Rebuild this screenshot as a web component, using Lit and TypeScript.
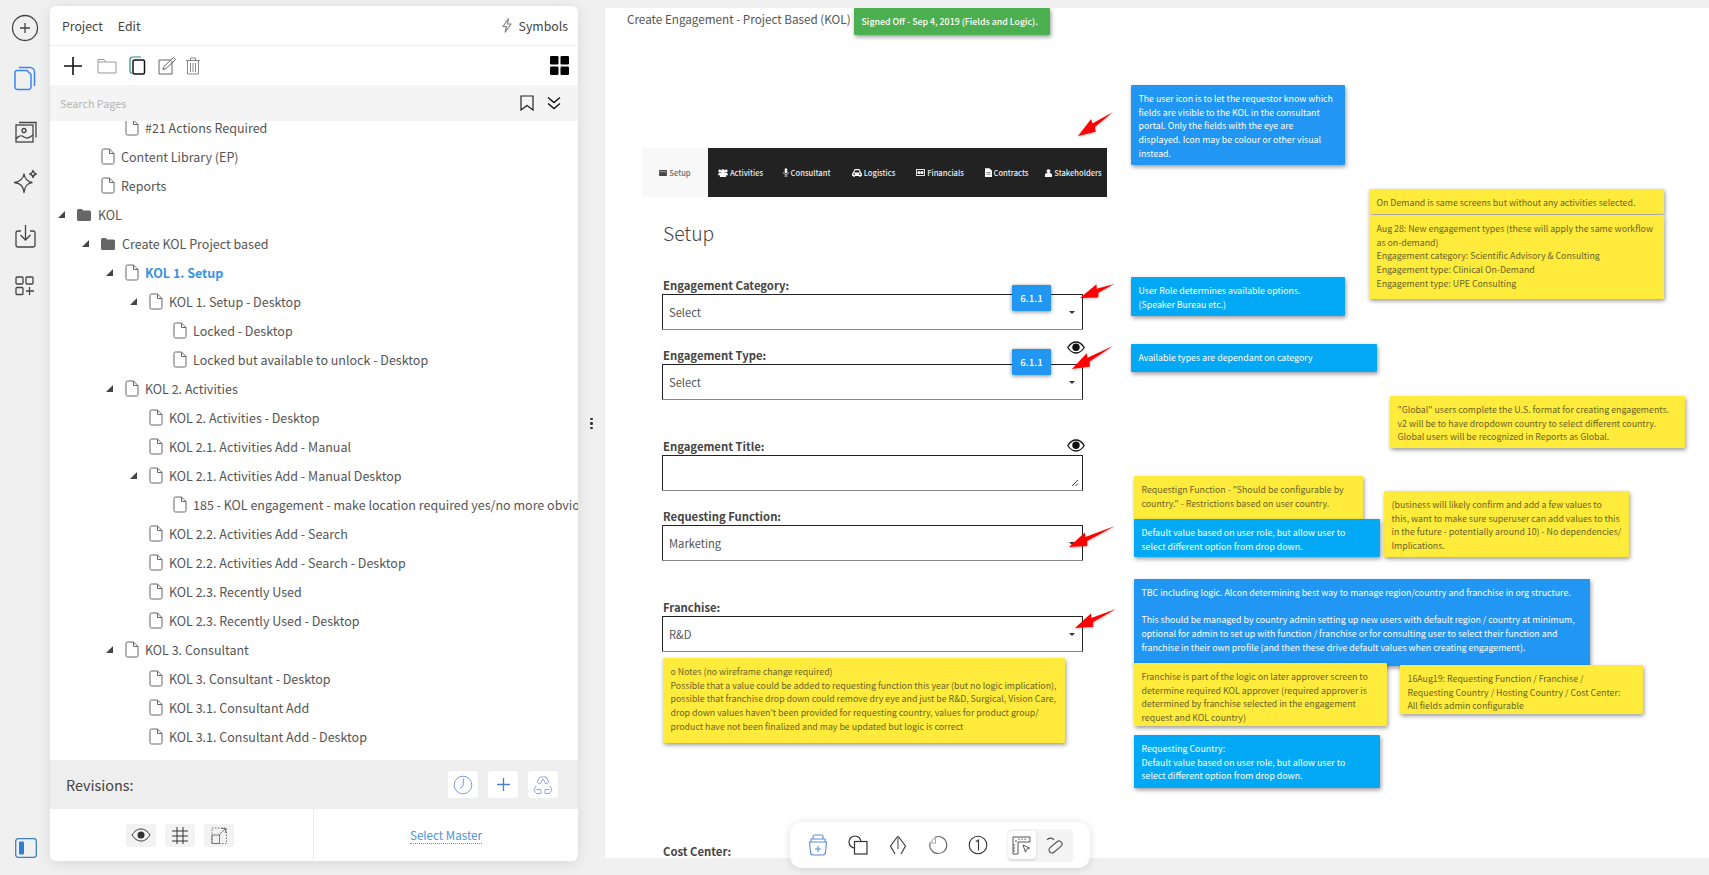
import { LitElement, html, svg, css } from "lit";
import { customElement } from "lit/decorators.js";

type Row = { t: string; l: number; tri?: boolean; folder?: boolean; active?: boolean };
const rows: Row[] = [
  { t: "#21 Actions Required", l: 2 },
  { t: "Content Library (EP)", l: 1 },
  { t: "Reports", l: 1 },
  { t: "KOL", l: 0, tri: true, folder: true },
  { t: "Create KOL Project based", l: 1, tri: true, folder: true },
  { t: "KOL 1. Setup", l: 2, tri: true, active: true },
  { t: "KOL 1. Setup - Desktop", l: 3, tri: true },
  { t: "Locked - Desktop", l: 4 },
  { t: "Locked but available to unlock - Desktop", l: 4 },
  { t: "KOL 2. Activities", l: 2, tri: true },
  { t: "KOL 2. Activities - Desktop", l: 3 },
  { t: "KOL 2.1. Activities Add - Manual", l: 3 },
  { t: "KOL 2.1. Activities Add - Manual Desktop", l: 3, tri: true },
  { t: "185 - KOL engagement - make location required yes/no more obvious", l: 4 },
  { t: "KOL 2.2. Activities Add - Search", l: 3 },
  { t: "KOL 2.2. Activities Add - Search - Desktop", l: 3 },
  { t: "KOL 2.3. Recently Used", l: 3 },
  { t: "KOL 2.3. Recently Used - Desktop", l: 3 },
  { t: "KOL 3. Consultant", l: 2, tri: true },
  { t: "KOL 3. Consultant - Desktop", l: 3 },
  { t: "KOL 3.1. Consultant Add", l: 3 },
  { t: "KOL 3.1. Consultant Add - Desktop", l: 3 },
];

// canvas origin is at page (605, 8); data below is in page coordinates
const OX = 605, OY = 8;
type Note = { x: number; y: number; w: number; h: number; c: string; lines: string[] };
const Y = "y", B = "b", L = "l", G = "g";
const notes: Note[] = [
  { x: 854, y: 8, w: 196, h: 27, c: G, lines: ["Signed Off - Sep 4, 2019 (Fields and Logic)."] },
  { x: 1131, y: 85, w: 214, h: 80, c: B, lines: ["The user icon is to let the requestor know which", "fields are visible to the KOL in the consultant", "portal. Only the fields with the eye are", "displayed. Icon may be colour or other visual", "instead."] },
  { x: 1369, y: 189, w: 295, h: 25, c: Y, lines: ["On Demand is same screens but without any activities selected."] },
  { x: 1369, y: 215, w: 295, h: 84, c: Y, lines: ["Aug 28: New engagement types (these will apply the same workflow", "as on-demand)", "Engagement category: Scientific Advisory & Consulting", "Engagement type: Clinical On-Demand", "Engagement type: UPE Consulting"] },
  { x: 1131, y: 277, w: 214, h: 39, c: L, lines: ["User Role determines available options.", "(Speaker Bureau etc.)"] },
  { x: 1131, y: 344, w: 246, h: 28, c: L, lines: ["Available types are dependant on category"] },
  { x: 1390, y: 396, w: 295, h: 52, c: Y, lines: ["\"Global\" users complete the U.S. format for creating engagements.", "v2 will be to have dropdown country to select different country.", "Global users will be recognized in Reports as Global."] },
  { x: 1134, y: 476, w: 229, h: 44, c: Y, lines: ["Requestign Function - \"Should be configurable by", "country.\" - Restrictions based on user country."] },
  { x: 1384, y: 491, w: 245, h: 66, c: Y, lines: ["(business will likely confirm and add a few values to", "this, want to make sure superuser can add values to this", "in the future - potentially around 10) - No dependencies/", "Implications."] },
  { x: 1134, y: 519, w: 246, h: 38, c: L, lines: ["Default value based on user role, but allow user to", "select different option from drop down."] },
  { x: 1134, y: 579, w: 456, h: 87, c: B, lines: ["TBC including logic. Alcon determining best way to manage region/country and franchise in org structure.", "\u00a0", "This should be managed by country admin setting up new users with default region / country at minimum,", "optional for admin to set up with function / franchise or for consulting user to select their function and", "franchise in their own profile (and then these drive default values when creating engagement)."] },
  { x: 1134, y: 663, w: 253, h: 63, c: Y, lines: ["Franchise is part of the logic on later approver screen to", "determine required KOL approver (required approver is", "determined by franchise selected in the engagement", "request and KOL country)"] },
  { x: 1400, y: 665, w: 243, h: 49, c: Y, lines: ["16Aug19: Requesting Function / Franchise /", "Requesting Country / Hosting Country / Cost Center:", "All fields admin configurable"] },
  { x: 663, y: 658, w: 402, h: 85, c: Y, lines: ["o Notes  (no wireframe change required)", "Possible that a value could be added to requesting function this year (but no logic implication),", "possible that franchise drop down could remove dry eye and just be R&D, Surgical, Vision Care,", "drop down values haven't been provided for requesting country, values for product group/", "product have not been finalized and may be updated but logic is correct"] },
  { x: 1134, y: 735, w: 246, h: 53, c: L, lines: ["Requesting Country:", "Default value based on user role, but allow user to", "select different option from drop down."] },
];

const fields = [
  { label: "Engagement Category:", ly: 285, top: 294, h: 36, val: "Select", caret: true },
  { label: "Engagement Type:", ly: 355, top: 364, h: 36, val: "Select", caret: true },
  { label: "Engagement Title:", ly: 446, top: 455, h: 36, val: "", caret: false },
  { label: "Requesting Function:", ly: 516, top: 525, h: 36, val: "Marketing", caret: true },
  { label: "Franchise:", ly: 607, top: 616, h: 36, val: "R&D", caret: true },
];

const arrows = [
  [1113, 112, 1078, 136],
  [1114, 284, 1080, 298],
  [1113, 346, 1072, 369],
  [1115, 526, 1069, 547],
  [1116, 609, 1075, 628],
];

const doc = html`<svg class="ico" width="14" height="17" viewBox="0 0 14 17"><path d="M2.5 1h6L13 5.500V14.500a1.500 1.500 0 0 1-1.500 1.500h-9A1.500 1.500 0 0 1 1 14.500V2.500A1.500 1.500 0 0 1 2.500 1zM8.500 1v4.500H13" fill="none" stroke="#666" stroke-width="1"/></svg>`;
const folder = html`<svg class="ico" width="16" height="14" viewBox="0 0 16 14"><path d="M1 2.500A1.500 1.500 0 0 1 2.500 1h3.200l1.500 1.500h6.300A1.500 1.500 0 0 1 15 4v7.500a1.500 1.500 0 0 1-1.500 1.500h-11A1.500 1.500 0 0 1 1 11.500z" fill="#666"/></svg>`;
const eye = html`<svg width="18" height="13" viewBox="0 0 18 13"><path d="M.8 6.500C3 3 5.800 1 9 1s6 2 8.200 5.500C15 10 12.200 12 9 12S3 10 .8 6.500z" fill="#fff" stroke="#111" stroke-width="1.300"/><circle cx="9" cy="6.300" r="3.700" fill="#111"/></svg>`;

const tabs = [
  { t: "Setup", w: 66, i: html`<svg width="8" height="6" viewBox="0 0 9 7"><path d="M0 0h9v7H0z" fill="#444"/><path d="M1 2h7" stroke="#ccc" stroke-width=".8"/></svg>` },
  { t: "Activities", w: 65, i: html`<svg width="10" height="8" viewBox="0 0 11 9"><circle cx="5.500" cy="2.500" r="2.300" fill="#fff"/><circle cx="1.800" cy="2.200" r="1.500" fill="#fff"/><circle cx="9.200" cy="2.200" r="1.500" fill="#fff"/><path d="M0 7c0-2 1-3 2-3h7c1 0 2 1 2 3H9v2H2V7z" fill="#fff"/></svg>` },
  { t: "Consultant", w: 67, i: html`<svg width="6" height="9" viewBox="0 0 7 10"><rect x="2" y="0" width="3" height="6" rx="1.500" fill="#fff"/><path d="M.7 4.500C.7 6.500 2 7.300 3.500 7.300S6.300 6.500 6.300 4.500M3.500 7.300V9M1.800 9.300h3.400" fill="none" stroke="#fff" stroke-width=".8"/></svg>` },
  { t: "Logistics", w: 67, i: html`<svg width="10" height="8" viewBox="0 0 11 9"><path d="M1 4l1.300-3.200C2.500.3 3 0 3.500 0h4c.5 0 1 .3 1.200.8L10 4c.6.300 1 .8 1 1.500V8H9.500v1H8V8H3v1H1.500V8H0V5.500C0 4.800.4 4.300 1 4z" fill="#fff"/><circle cx="2.300" cy="5.800" r=".9" fill="#222"/><circle cx="8.700" cy="5.800" r=".9" fill="#222"/><path d="M2.400 3.800l.9-2.500h4.400l.9 2.500z" fill="#222"/></svg>` },
  { t: "Financials", w: 66, i: html`<svg width="9" height="7" viewBox="0 0 10 8"><rect width="10" height="8" fill="#fff"/><rect x="1" y="1" width="8" height="6" fill="#222"/><circle cx="3.300" cy="4" r="1.800" fill="#fff"/><circle cx="6.700" cy="4" r="1.800" fill="#fff"/></svg>` },
  { t: "Contracts", w: 67, i: html`<svg width="7" height="9" viewBox="0 0 8 10"><path d="M0 0h5l3 3v7H0z" fill="#fff"/><path d="M1.500 5h5M1.500 7h5" stroke="#222" stroke-width=".6"/></svg>` },
  { t: "Stakeholders", w: 67, i: html`<svg width="7" height="8" viewBox="0 0 8 9"><circle cx="4" cy="2.300" r="2.200" fill="#fff"/><path d="M0 9V6.800C0 5.300 1 4.500 2.200 4.500h3.600C7 4.500 8 5.300 8 6.800V9z" fill="#fff"/></svg>` },
];

@customElement("app-root")
export class AppRoot extends LitElement {
  static styles = css`
    :host { display: block; height: 875px; background: #f0f0f0; overflow: hidden; font-family: "Noto Sans CJK KR", "Noto Sans", sans-serif; position: relative; color: #555; }
    svg { display: block; flex: none; }
    .layout { display: flex; height: 875px; }
    .rail { width: 50px; flex: none; display: flex; flex-direction: column; align-items: center; position: relative; }
    .rail-i { position: absolute; }
    .panel { width: 528px; flex: none; margin-top: 6px; height: 855px; background: #fff; border-radius: 6px; box-shadow: 0 2px 14px rgba(0,0,0,.1); display: flex; flex-direction: column; overflow: hidden; }
    .menu { height: 39px; flex: none; display: flex; align-items: center; padding: 0 10px 0 12px; gap: 15px; border-bottom: 1px solid #ececec; font-size: 12.300px; color: #444; }
    .menu .sp { flex: 1; }
    .sym { display: flex; align-items: center; gap: 7px; color: #444; }
    .tools { height: 39px; flex: none; display: flex; align-items: center; padding: 0 9px 0 14px; }
    .tools .sp { flex: 1; }
    .search { height: 36px; flex: none; background: #f4f4f4; display: flex; align-items: center; padding: 0 17px 0 10px; font-size: 10.800px; color: #b5b5b5; gap: 13px; }
    .search .sp { flex: 1; }
    .tree { flex: 1; overflow: hidden; min-height: 0; }
    .tree-in { margin-top: -8px; }
    .row { height: 29px; display: flex; align-items: center; position: relative; white-space: nowrap; font-size: 12.500px; color: #555; }
    .row.active { color: #3a92e0; font-weight: 700; }
    .tri { position: absolute; width: 7px; height: 7px; top: 11px; }
    .ico { margin-right: 6px; }
    .rev { height: 49px; flex: none; background: #eee; display: flex; align-items: center; padding: 0 20px 0 16px; font-size: 14.400px; color: #444; }
    .rev .sp { flex: 1; }
    .rev-b { width: 30px; height: 27px; background: #fff; border-radius: 3px; display: flex; align-items: center; justify-content: center; margin-left: 10px; }
    .foot { height: 52px; flex: none; display: flex; }
    .foot-l { width: 264px; border-right: 1px solid #ececec; display: flex; justify-content: center; align-items: center; gap: 9px; padding-right: 4px; box-sizing: border-box; }
    .foot-b { width: 30px; height: 23px; background: #f2f2f2; border-radius: 3px; display: flex; align-items: center; justify-content: center; }
    .foot-r { flex: 1; display: flex; justify-content: center; align-items: center; }
    .master { color: #4a94d8; font-size: 11.600px; border-bottom: 1px dotted #888; line-height: 16px; }
    .gut { width: 27px; flex: none; display: flex; align-items: center; justify-content: center; padding-bottom: 28px; box-sizing: border-box; }
    .dots { display: flex; flex-direction: column; gap: 2px; }
    .dots i { width: 2.500px; height: 2.500px; background: #333; border-radius: 50%; display: block; }
    .canvas { flex: 1; margin-top: 8px; height: 850px; background: #fff; position: relative; overflow: hidden; }
    .abs { position: absolute; }
    .page-title { font-size: 11.700px; color: #555; white-space: nowrap; line-height: 20px; }
    .tabbar { display: flex; height: 49px; background: #222; font-size: 7.600px; font-weight: 500; color: #eee; }
    .tab { display: flex; align-items: center; justify-content: center; gap: 2px; white-space: nowrap; box-sizing: border-box; }
    .tab.on { background: #f8f8f8; color: #666; }
    .setup { font-size: 19.300px; font-weight: 300; color: #444; line-height: 28px; }
    .lab { font-size: 11.300px; font-weight: 700; color: #444; line-height: 18px; white-space: nowrap; }
    .box { box-sizing: border-box; border: 1px solid #222; border-bottom: 1.500px solid #888; border-radius: 1px; display: flex; align-items: center; padding-left: 6px; font-size: 11.200px; color: #555; background: #fff; }
    .caret { position: absolute; width: 0; height: 0; border-left: 3.500px solid transparent; border-right: 3.500px solid transparent; border-top: 3.500px solid #333; right: 7px; top: 16px; }
    .handle { position: absolute; right: 3px; bottom: 3px; }
    .badge { background: #2196f3; color: #fff; font-size: 9.700px; font-weight: 500; display: flex; align-items: center; justify-content: center; box-shadow: 0 1px 4px rgba(0,0,0,.45); border-radius: 1px; }
    .note { box-sizing: border-box; padding: 7px 7.500px; font-size: 8.800px; line-height: 13.700px; box-shadow: 1px 2px 4px rgba(0,0,0,.4); white-space: nowrap; overflow: hidden; border-radius: 1px; }
    .note.y { background: #ffeb3b; color: #6a6428; }
    .note.b { background: #2196f3; color: #fff; }
    .note.l { background: #03a9f4; color: #fff; }
    .note.g { background: #4caf50; color: #fff; font-weight: 500; }
    .float { position: absolute; left: 790px; top: 822px; width: 300px; height: 46px; background: #fff; border-radius: 12px; box-shadow: 0 1px 8px rgba(0,0,0,.14); display: flex; align-items: center; box-sizing: border-box; padding-left: 8px; }
    .fb { width: 40px; display: flex; justify-content: center; }
    .seg { width: 65px; height: 33px; margin-left: 10px; background: #f4f4f4; border-radius: 4px; display: flex; align-items: center; }
    .seg-on { width: 28px; height: 28px; background: #fff; border-radius: 4px; box-shadow: 0 1px 3px rgba(0,0,0,.15); display: flex; align-items: center; justify-content: center; }
    .seg-off { flex: 1; display: flex; justify-content: center; }
    .arrows { position: absolute; left: 0; top: 0; pointer-events: none; }
  `;

  arrowPts(a: number[]) {
    const [x1, y1, x2, y2] = a;
    const dx = x2 - x1, dy = y2 - y1, len = Math.hypot(dx, dy);
    const ux = dx / len, uy = dy / len, nx = -uy, ny = ux;
    const p = (t: number, s: number) => `${(x1 + ux * t + nx * s - OX).toFixed(1)},${(y1 + uy * t + ny * s - OY).toFixed(1)}`;
    const b = len - 19;
    return [p(0, 0), p(b, 2.2), p(b - 1.5, 6.5), p(len, 0), p(b + 2, -6.5), p(b, -2.2)].join(" ");
  }

  rail() {
    return html`<div class="rail">
      <svg class="rail-i" style="left:11px;top:14px" width="28" height="28" viewBox="0 0 28 28" fill="none" stroke="#444" stroke-width="1.300"><circle cx="14" cy="14" r="12.500"/><path d="M14 9v10M9 14h10"/></svg>
      <svg class="rail-i" style="left:14px;top:66px" width="22" height="25" viewBox="0 0 22 25" fill="none" stroke="#3b82f6" stroke-width="1.500"><path d="M5 1.500h11c2.500 0 4.500 2 4.500 4.500v14"/><path d="M3 4.500h10l4 4V21a2.500 2.500 0 0 1-2.500 2.500H3.500A2.500 2.500 0 0 1 1 21V6.500a2 2 0 0 1 2-2z"/></svg>
      <svg class="rail-i" style="left:15px;top:121px" width="22" height="22" viewBox="0 0 22 22" fill="none" stroke="#444" stroke-width="1.300"><path d="M4 1.500h17v15"/><rect x="1" y="4" width="17" height="17"/><circle cx="9" cy="9.500" r="2"/><path d="M1 18c3-4 5-4 8-2s5 1 9-2"/></svg>
      <svg class="rail-i" style="left:13px;top:169px" width="25" height="25" viewBox="0 0 25 25" fill="none" stroke="#444" stroke-width="1.300" stroke-linejoin="round"><path d="M11 5c.8 5 3 7.500 8 8.500-5 1-7.200 3.500-8 10-.8-6.500-3-9-9.500-10C7.500 12.500 10.200 10 11 5z"/><path d="M20 1.500c.4 2 1.200 3 3.300 3.500-2.100.5-2.900 1.500-3.300 3.500-.4-2-1.200-3-3.300-3.500 2.100-.5 2.900-1.500 3.300-3.500z"/></svg>
      <svg class="rail-i" style="left:15px;top:224px" width="21" height="24" viewBox="0 0 21 24" fill="none" stroke="#444" stroke-width="1.300"><path d="M6 7H3a2 2 0 0 0-2 2v12a2 2 0 0 0 2 2h15a2 2 0 0 0 2-2V9a2 2 0 0 0-2-2h-3"/><path d="M10.500 1v14M5.500 11l5 5 5-5"/></svg>
      <svg class="rail-i" style="left:15px;top:276px" width="20" height="20" viewBox="0 0 20 20" fill="none" stroke="#444" stroke-width="1.300"><rect x="1" y="1" width="7" height="7" rx="1"/><rect x="11" y="1" width="7" height="7" rx="1"/><rect x="1" y="11.500" width="7" height="7" rx="1"/><path d="M14.500 11v8M11 15h8"/></svg>
      <svg class="rail-i" style="left:15px;top:838px" width="22" height="20" viewBox="0 0 22 20"><rect x=".7" y=".7" width="20.600" height="18.600" rx="2.500" fill="none" stroke="#3b82c4" stroke-width="1.300"/><rect x="4" y="3.500" width="5" height="13" rx="1" fill="#2f7fd0"/></svg>
    </div>`;
  }

  panel() {
    return html`<div class="panel">
      <div class="menu"><span>Project</span><span>Edit</span><span class="sp"></span>
        <span class="sym"><svg width="10" height="15" viewBox="0 0 10 15"><path d="M6.500.5L1 8.500h3.500L3 14.500 9 6H5.500z" fill="none" stroke="#888" stroke-width="1.200"/></svg>Symbols</span></div>
      <div class="tools">
        <svg width="18" height="18" viewBox="0 0 18 18" style="margin-right:15px"><path d="M9 0v18M0 9h18" stroke="#111" stroke-width="1.600"/></svg>
        <svg width="20" height="16" viewBox="0 0 20 16" fill="none" stroke="#999" style="margin-right:12px"><path d="M1 15V1.500h6l1.500 2.500H19v11zM1 4h7.500"/></svg>
        <svg width="17" height="19" viewBox="0 0 17 19" fill="none" style="margin-right:12px"><path d="M3 17.500C1.500 17 1 16 1 15V4c0-2 1-3 3-3h8" stroke="#2a8a78" stroke-width="1.200"/><rect x="4" y="4" width="11.500" height="14" rx="1.500" stroke="#111" stroke-width="1.500"/></svg>
        <svg width="19" height="19" viewBox="0 0 19 19" fill="none" stroke="#666" style="margin-right:8px"><path d="M14 5v13H1V4h12"/><path d="M5 13.500l1-3 9.500-9 2 2-9.500 9z"/></svg>
        <svg width="16" height="18" viewBox="0 0 16 18" fill="none" stroke="#888"><path d="M1 3.500h14M5.500 3.500V1h5v2.500M2.500 3.500V17h11V3.500M5.500 6v9M8 6v9M10.500 6v9"/></svg>
        <span class="sp"></span>
        <svg width="19" height="19" viewBox="0 0 19 19" fill="#000"><rect width="8.500" height="8.500" rx="1.200"/><rect x="10.500" width="8.500" height="8.500" rx="1.200"/><rect y="10.500" width="8.500" height="8.500" rx="1.200"/><rect x="10.500" y="10.500" width="8.500" height="8.500" rx="1.200"/></svg>
      </div>
      <div class="search"><span>Search Pages</span><span class="sp"></span>
        <svg width="14" height="16" viewBox="0 0 14 16" fill="none" stroke="#222" stroke-width="1.200"><path d="M1 1h12v14L7 10.500 1 15z"/></svg>
        <svg width="14" height="14" viewBox="0 0 14 14" fill="none" stroke="#111" stroke-width="1.400"><path d="M1 1.500l6 5 6-5M1 7.500l6 5 6-5"/></svg>
      </div>
      <div class="tree"><div class="tree-in">${rows.map(r => html`
        <div class="row ${r.active ? "active" : ""}" style="padding-left:${(r.folder ? 26 : 27) + 24 * r.l}px">
          ${r.tri ? html`<svg class="tri" style="left:${8 + 24 * r.l}px" viewBox="0 0 7 7"><path d="M7 0v7H0z" fill="#444"/></svg>` : ""}
          ${r.folder ? folder : doc}<span>${r.t}</span>
        </div>`)}</div></div>
      <div class="rev"><span>Revisions:</span><span class="sp"></span>
        <div class="rev-b"><svg width="20" height="20" viewBox="0 0 20 20" fill="none" stroke="#7d9fd4"><circle cx="10" cy="10" r="8.800"/><path d="M10.500 3.500L10 11l-3 2.500"/></svg></div>
        <div class="rev-b"><svg width="13" height="13" viewBox="0 0 13 13"><path d="M6.500 0v13M0 6.500h13" stroke="#4a80d0" stroke-width="1.300"/></svg></div>
        <div class="rev-b"><svg width="20" height="20" viewBox="0 0 20 20" fill="none" stroke="#8fa6d6"><path d="M7 2h6l3 5-3 2-3-5-3 5-3-2zM3 11l-2 4 2.500 3.500H8v-4H3.500M17 11l2 4-2.500 3.500H12v-4h4.500"/></svg></div>
      </div>
      <div class="foot">
        <div class="foot-l">
          <div class="foot-b"><svg width="20" height="14" viewBox="0 0 20 14"><path d="M1 7c2.500-4 5.500-6 9-6s6.500 2 9 6c-2.500 4-5.500 6-9 6s-6.500-2-9-6z" fill="none" stroke="#333"/><circle cx="10" cy="7" r="3.500" fill="#333"/></svg></div>
          <div class="foot-b"><svg width="16" height="17" viewBox="0 0 16 17"><path d="M5 0v17M11 0v17M0 4h16M0 9h16M0 14h16" stroke="#333" fill="none"/></svg></div>
          <div class="foot-b"><svg width="16" height="17" viewBox="0 0 16 17" fill="none" stroke="#777"><path d="M1 1h14.500v15.500H1z" stroke-dasharray="1.500 1.500"/><path d="M1 8h7.500v8.500H1zM8 8l6-6M10 1.500h4.500V6"/></svg></div>
        </div>
        <div class="foot-r"><span class="master">Select Master</span></div>
      </div>
    </div>`;
  }

  canvas() {
    return html`<div class="canvas">
      <div class="abs page-title" style="left:22px;top:1px">Create Engagement - Project Based (KOL)</div>
      <div class="abs tabbar" style="left:${642 - OX}px;top:${148 - OY}px">
        ${tabs.map((t, i) => html`<div class="tab ${i === 0 ? "on" : ""}" style="width:${t.w}px">${t.i}<span>${t.t}</span></div>`)}
      </div>
      <div class="abs setup" style="left:${663 - OX}px;top:${219 - OY}px">Setup</div>
      ${fields.map(f => html`
        <div class="abs lab" style="left:${663 - OX}px;top:${f.ly - 9 - OY}px">${f.label}</div>
        <div class="abs box" style="left:${662 - OX}px;top:${f.top - OY}px;width:421px;height:${f.h}px">${f.val}
          ${f.caret ? html`<span class="caret"></span>` : html`<svg class="handle" width="8" height="8" viewBox="0 0 8 8"><path d="M1 7l6-6M4.500 7L7 4.500" stroke="#444" fill="none"/></svg>`}
        </div>`)}
      <div class="abs" style="left:${1067 - OX}px;top:${341 - OY}px">${eye}</div>
      <div class="abs" style="left:${1067 - OX}px;top:${439 - OY}px">${eye}</div>
      ${[285, 349].map(y => html`<div class="abs badge" style="left:${1012 - OX}px;top:${y - OY}px;width:39px;height:26px">6.1.1</div>`)}
      ${notes.map(n => html`<div class="abs note ${n.c}" style="left:${n.x - OX}px;top:${n.y - OY}px;width:${n.w}px;height:${n.h}px">${n.lines.map(l => html`<div>${l}</div>`)}</div>`)}
      <div class="abs lab" style="left:${663 - OX}px;top:${842 - OY}px">Cost Center:</div>
      <svg class="arrows" width="1104" height="850"><defs><filter id="sh" x="-30%" y="-30%" width="160%" height="160%"><feDropShadow dx="0" dy="1" stdDeviation="1" flood-color="#000" flood-opacity=".25"/></filter></defs>
        ${arrows.map(a => svg`<polygon points="${this.arrowPts(a)}" fill="#f00" filter="url(#sh)"></polygon>`)}
      </svg>
    </div>`;
  }

  float() {
    return html`<div class="float">
      <div class="fb"><svg width="20" height="22" viewBox="0 0 20 22" fill="none" stroke="#5b8dd6" stroke-width="1.100"><path d="M5 5V2.500C5 1.500 6 1 7 1h6c1 0 2 .5 2 1.500V5M3 7.500V5h14v2.500M1.500 8h17l-1 10a3 3 0 0 1-3 3h-9a3 3 0 0 1-3-3z"/><path d="M10 12v6M7 15h6"/></svg></div>
      <div class="fb"><svg width="20" height="20" viewBox="0 0 20 20" fill="none" stroke="#333" stroke-width="1.200"><circle cx="7" cy="7" r="6"/><rect x="6.500" y="6.500" width="12.500" height="12.500" fill="#fff"/></svg></div>
      <div class="fb"><svg width="18" height="20" viewBox="0 0 18 20" fill="none" stroke="#333" stroke-width="1.100"><path d="M9 1L1.500 11 6 19M9 1l7.500 10L12 19"/><path d="M9 1v13" stroke="#777" stroke-width="1.400"/></svg></div>
      <div class="fb"><svg width="20" height="20" viewBox="0 0 20 20" fill="none" stroke="#666" stroke-width="1.100"><path d="M7.500 2a8.500 8.500 0 1 1-5.500 6"/><path d="M2 8l5.500-6v6z" stroke="#aaa"/></svg></div>
      <div class="fb"><svg width="20" height="20" viewBox="0 0 20 20" fill="none" stroke="#333" stroke-width="1.100"><circle cx="10" cy="10" r="8.800"/><path d="M7.800 6.800L10.500 5v10.500"/></svg></div>
      <div class="seg">
        <div class="seg-on"><svg width="20" height="19" viewBox="0 0 20 19" fill="none" stroke="#555" stroke-width="1"><path d="M1 18V1h17v5H6v12zM4 4v2M7 2.500V4M10 2.500V4M13 2.500V4M1 9h2M1 12h2M1 15h2"/><path d="M11 9l6.500 3-3 1.200-1 3z"/></svg></div>
        <div class="seg-off"><svg width="19" height="17" viewBox="0 0 19 17" fill="none" stroke="#555" stroke-width="1.200"><path d="M2 3c2-3 6-2 7 0"/><rect x="3" y="7" width="15" height="6" rx="3" transform="rotate(-40 10.500 10)"/></svg></div>
      </div>
    </div>`;
  }

  render() {
    return html`<div class="layout">
      ${this.rail()}${this.panel()}
      <div class="gut"><div class="dots"><i></i><i></i><i></i></div></div>
      ${this.canvas()}
    </div>${this.float()}`;
  }
}
